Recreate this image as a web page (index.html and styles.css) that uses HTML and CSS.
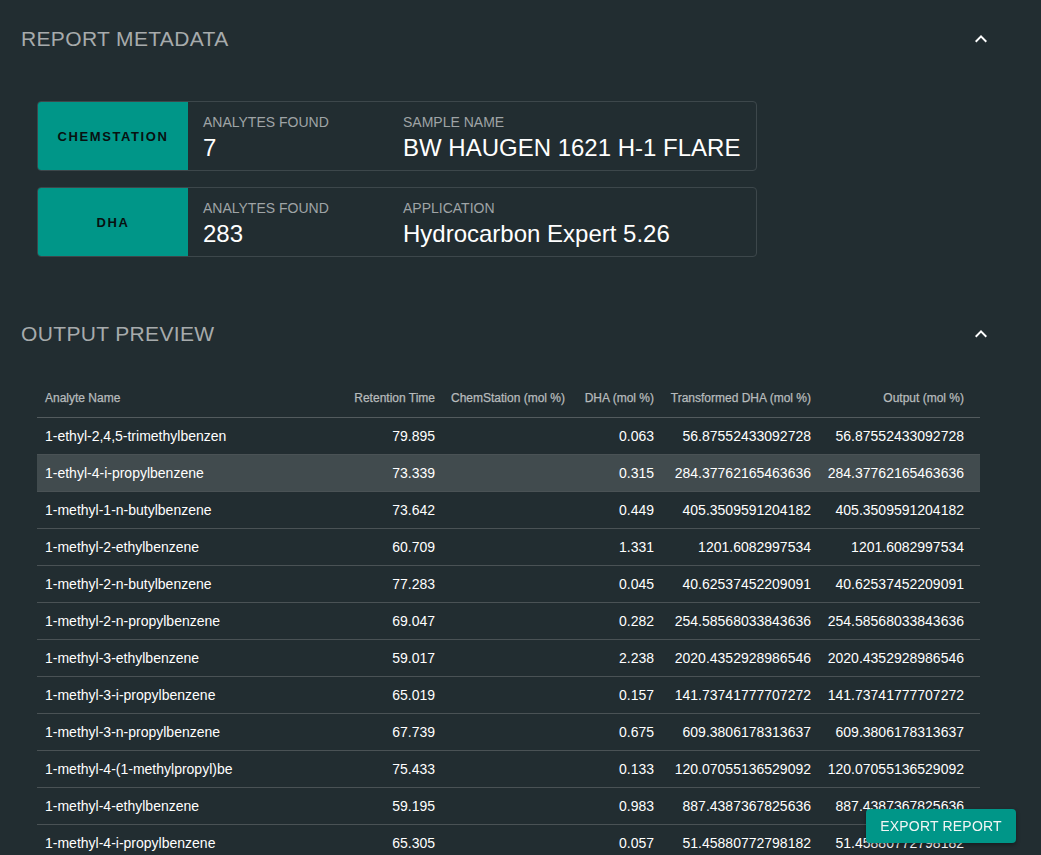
FILE: index.html
```html
<!DOCTYPE html>
<html>
<head>
<meta charset="utf-8">
<link rel="stylesheet" href="styles.css">
</head>
<body>
<div class="page">
  <section class="section">
    <div class="section-head">
      <h2 class="section-title">REPORT METADATA</h2>
      <svg class="chev" viewBox="0 0 24 24" width="24" height="24"><path d="M12 8l-6 6 1.41 1.41L12 10.83l4.59 4.58L18 14z" fill="#fff"/></svg>
    </div>
    <div class="cards">
      <div class="card">
        <div class="card-tag">CHEMSTATION</div>
        <div class="field field-a">
          <div class="field-label">ANALYTES FOUND</div>
          <div class="field-value">7</div>
        </div>
        <div class="field">
          <div class="field-label">SAMPLE NAME</div>
          <div class="field-value">BW HAUGEN 1621 H-1 FLARE</div>
        </div>
      </div>
      <div class="card">
        <div class="card-tag">DHA</div>
        <div class="field field-a">
          <div class="field-label">ANALYTES FOUND</div>
          <div class="field-value">283</div>
        </div>
        <div class="field">
          <div class="field-label">APPLICATION</div>
          <div class="field-value">Hydrocarbon Expert 5.26</div>
        </div>
      </div>
    </div>
  </section>

  <section class="section section-output">
    <div class="section-head">
      <h2 class="section-title">OUTPUT PREVIEW</h2>
      <svg class="chev" viewBox="0 0 24 24" width="24" height="24"><path d="M12 8l-6 6 1.41 1.41L12 10.83l4.59 4.58L18 14z" fill="#fff"/></svg>
    </div>
    <table class="grid">
      <colgroup>
        <col class="c1"><col class="c2"><col class="c3"><col class="c4"><col class="c5"><col class="c6">
      </colgroup>
      <thead>
        <tr>
          <th class="left">Analyte Name</th>
          <th>Retention Time</th>
          <th>ChemStation (mol %)</th>
          <th>DHA (mol %)</th>
          <th>Transformed DHA (mol %)</th>
          <th>Output (mol %)</th>
        </tr>
      </thead>
      <tbody>
        <tr><td class="left">1-ethyl-2,4,5-trimethylbenzen</td><td>79.895</td><td></td><td>0.063</td><td>56.87552433092728</td><td>56.87552433092728</td></tr>
        <tr class="hover"><td class="left">1-ethyl-4-i-propylbenzene</td><td>73.339</td><td></td><td>0.315</td><td>284.37762165463636</td><td>284.37762165463636</td></tr>
        <tr><td class="left">1-methyl-1-n-butylbenzene</td><td>73.642</td><td></td><td>0.449</td><td>405.3509591204182</td><td>405.3509591204182</td></tr>
        <tr><td class="left">1-methyl-2-ethylbenzene</td><td>60.709</td><td></td><td>1.331</td><td>1201.6082997534</td><td>1201.6082997534</td></tr>
        <tr><td class="left">1-methyl-2-n-butylbenzene</td><td>77.283</td><td></td><td>0.045</td><td>40.62537452209091</td><td>40.62537452209091</td></tr>
        <tr><td class="left">1-methyl-2-n-propylbenzene</td><td>69.047</td><td></td><td>0.282</td><td>254.58568033843636</td><td>254.58568033843636</td></tr>
        <tr><td class="left">1-methyl-3-ethylbenzene</td><td>59.017</td><td></td><td>2.238</td><td>2020.4352928986546</td><td>2020.4352928986546</td></tr>
        <tr><td class="left">1-methyl-3-i-propylbenzene</td><td>65.019</td><td></td><td>0.157</td><td>141.73741777707272</td><td>141.73741777707272</td></tr>
        <tr><td class="left">1-methyl-3-n-propylbenzene</td><td>67.739</td><td></td><td>0.675</td><td>609.3806178313637</td><td>609.3806178313637</td></tr>
        <tr><td class="left">1-methyl-4-(1-methylpropyl)be</td><td>75.433</td><td></td><td>0.133</td><td>120.07055136529092</td><td>120.07055136529092</td></tr>
        <tr><td class="left">1-methyl-4-ethylbenzene</td><td>59.195</td><td></td><td>0.983</td><td>887.4387367825636</td><td>887.4387367825636</td></tr>
        <tr><td class="left">1-methyl-4-i-propylbenzene</td><td>65.305</td><td></td><td>0.057</td><td>51.45880772798182</td><td>51.45880772798182</td></tr>
      </tbody>
    </table>
  </section>
</div>
<button class="export">EXPORT REPORT</button>
</body>
</html>
```

FILE: styles.css
```css
html, body {
  margin: 0;
  padding: 0;
  height: 100%;
  overflow: hidden;
}
body {
  background: #222d31;
  font-family: "Liberation Sans", Arial, sans-serif;
  color: #fff;
}
.page {
  padding: 0 48px 0 21px;
}
.section-head {
  display: flex;
  align-items: center;
  justify-content: space-between;
  height: 78px;
}
.section-title {
  margin: 0;
  font-size: 21px;
  font-weight: 400;
  color: #a7abac;
  letter-spacing: 0.35px;
}
.chev {
  display: block;
}
.cards {
  margin: 23px 0 0 16px;
  display: flex;
  flex-direction: column;
  gap: 16px;
}
.card {
  width: 720px;
  height: 70px;
  box-sizing: border-box;
  border: 1px solid #3d474b;
  border-radius: 4px;
  display: flex;
  overflow: hidden;
}
.card-tag {
  width: 150px;
  flex: none;
  background: #009688;
  color: #081110;
  font-size: 13px;
  font-weight: 700;
  letter-spacing: 1.6px;
  display: flex;
  align-items: center;
  justify-content: center;
}
.field {
  padding: 12px 0 0 15px;
}
.field-a {
  width: 185px;
}
.field-label {
  font-size: 14px;
  line-height: 16px;
  color: #9fa4a6;
}
.field-value {
  margin-top: 4px;
  font-size: 24px;
  line-height: 28px;
  color: #fff;
}
.section-output {
  margin-top: 38px;
}
.grid {
  margin: 8px 0 0 16px;
  border-collapse: collapse;
  table-layout: fixed;
  width: 943px;
}
.c1 { width: 302px; }
.c2 { width: 112px; }
.c3 { width: 127px; }
.c4 { width: 92px; }
.c5 { width: 157px; }
.c6 { width: 153px; }
.grid th {
  height: 36px;
  font-size: 12px;
  font-weight: 400;
  color: #b7bbbc;
  text-align: right;
  padding: 0 16px 2px 0;
  box-sizing: border-box;
  white-space: nowrap;
  border-bottom: 1px solid #535b5e;
  -webkit-text-stroke: 0.25px #b7bbbc;
}
.grid td {
  height: 36px;
  font-size: 14px;
  color: #fff;
  text-align: right;
  padding: 0 16px 0 0;
  white-space: nowrap;
  border-bottom: 1px solid #4a5255;
}
.grid .left {
  text-align: left;
  padding-left: 8px;
  padding-right: 0;
}
.grid tr.hover td {
  background: #414b4e;
}
.export {
  position: fixed;
  right: 25px;
  bottom: 12px;
  width: 150px;
  height: 34px;
  background: #009688;
  color: #f2f6f5;
  border: none;
  border-radius: 4px;
  font-family: "Liberation Sans", Arial, sans-serif;
  font-size: 14px;
  letter-spacing: 0.2px;
  box-shadow: 0 2px 4px rgba(0,0,0,0.35);
  padding: 0;
}
```
